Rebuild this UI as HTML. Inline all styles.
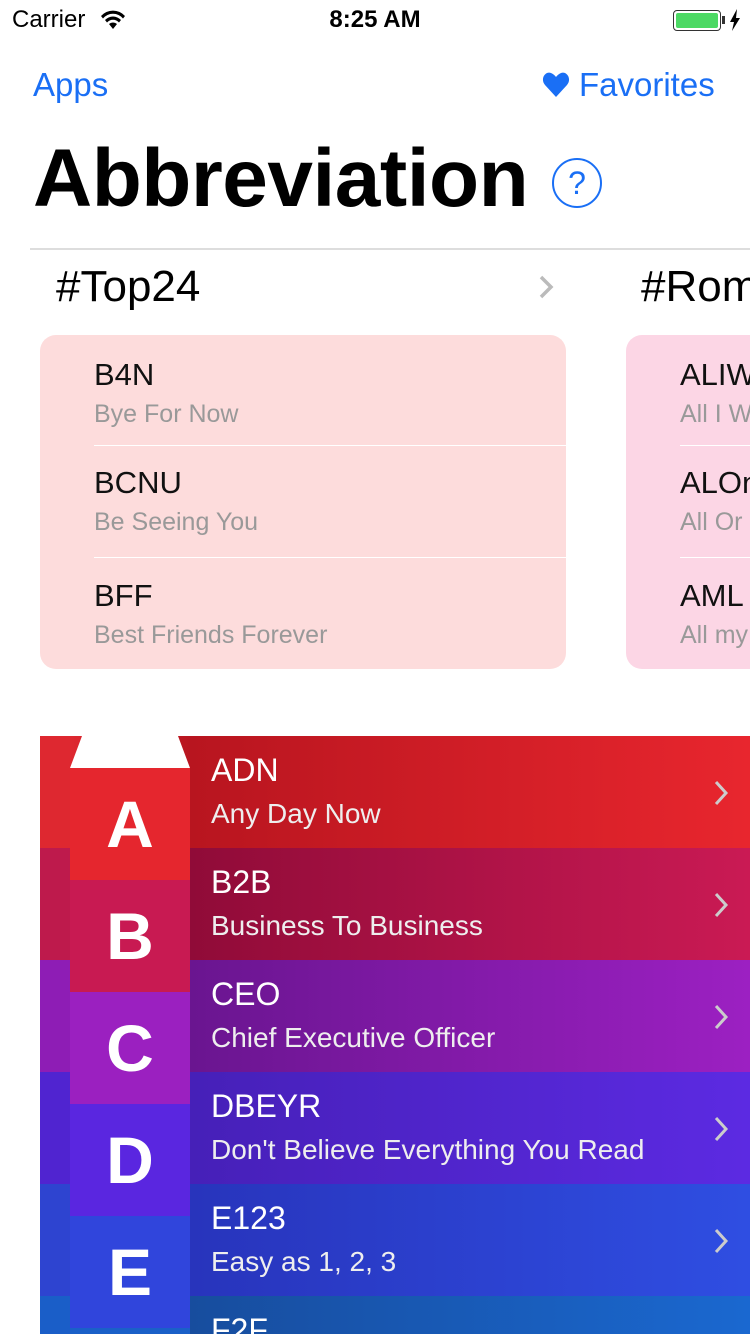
<!DOCTYPE html>
<html style="overflow:hidden;width:750px;height:1334px"><head><meta charset="utf-8"><style>
*{margin:0;padding:0;box-sizing:border-box}
body{width:750px;height:1334px;overflow:hidden;background:#fff;font-family:"Liberation Sans",sans-serif;position:relative}
.a{position:absolute;white-space:nowrap}
.blue{color:#1a6ff5}
.card{position:absolute;top:335px;height:334px;border-radius:16px;overflow:hidden}
.t{font-size:31px;color:#111}
.s{font-size:25px;color:#999}
.sep{position:absolute;height:1px;background:#fff}
.row{position:absolute;left:40px;width:710px;height:112px}
.row .ab{position:absolute;left:171px;top:16px;font-size:32px;color:#fff}
.row .ds{position:absolute;left:171px;top:62px;font-size:28px;color:#eee}
.row svg{position:absolute;left:672px;top:44px}
.idx{position:absolute;left:70px;width:120px;height:112px;color:#fff;font-weight:bold;font-size:66px;text-align:center;line-height:112px}
</style></head><body>
<div class="a" style="left:12px;top:6px;font-size:24px">Carrier</div>
<svg class="a" style="left:100px;top:10px" width="26" height="20" viewBox="0 0 26 20"><path d="M13 19l4-5a6 6 0 0 0-8 0z M5 10a11 11 0 0 1 16 0l-2 2.5a8 8 0 0 0-12 0z M1 6a16 16 0 0 1 24 0l-2 2.5a13 13 0 0 0-20 0z" fill="#000"/></svg>
<div class="a" style="left:0;width:750px;text-align:center;top:6px;font-size:24px;font-weight:bold">8:25 AM</div>
<div class="a" style="left:673px;top:10px;width:48px;height:21px;border:1.5px solid #333;border-radius:4px;padding:2px"><div style="width:100%;height:100%;background:#4cd964;border-radius:2px"></div></div>
<div class="a" style="left:722px;top:16px;width:3px;height:8px;background:#333"></div>
<svg class="a" style="left:729px;top:9px" width="12" height="22" viewBox="0 0 12 22"><path d="M8 0L1 13h4l-2 9 8-13H7z" fill="#000"/></svg>
<div class="a blue" style="left:33px;top:66px;font-size:33px">Apps</div>
<svg class="a" style="left:542px;top:72px" width="28" height="26" viewBox="0 0 28 26"><path d="M14 25L3 13C-2 7 3-1 9 1c2 .7 4 2.5 5 4 1-1.5 3-3.3 5-4 6-2 11 6 6 12z" fill="#1a6ff5"/></svg>
<div class="a blue" style="left:579px;top:66px;font-size:33px">Favorites</div>
<div class="a" style="left:33px;top:132px;font-size:82px;font-weight:bold;color:#000;letter-spacing:-0.5px">Abbreviation</div>
<div class="a blue" style="left:552px;top:158px;width:50px;height:50px;border:2px solid #1a6ff5;border-radius:50%;text-align:center;font-size:32px;line-height:46px">?</div>
<div class="a" style="left:30px;top:248px;width:720px;height:2px;background:#ddd"></div>
<div class="a" style="left:56px;top:262px;font-size:44px;color:#000">#Top24</div>
<svg class="a" style="left:538px;top:275px" width="18" height="24" viewBox="0 0 18 24"><path d="M3 2l10 10-10 10" stroke="#bbb" stroke-width="3.5" fill="none"/></svg>
<div class="a" style="left:641px;top:262px;font-size:44px;color:#000">#Rom</div>
<div class="card" style="left:40px;width:526px;background:#fddcdc">
<div class="a t" style="left:54px;top:22px">B4N</div><div class="a s" style="left:54px;top:65px">Bye For Now</div>
<div class="sep" style="left:54px;right:0;top:110px"></div>
<div class="a t" style="left:54px;top:130px">BCNU</div><div class="a s" style="left:54px;top:173px">Be Seeing You</div>
<div class="sep" style="left:54px;right:0;top:222px"></div>
<div class="a t" style="left:54px;top:243px">BFF</div><div class="a s" style="left:54px;top:286px">Best Friends Forever</div>
</div>
<div class="card" style="left:626px;width:200px;background:#fcd6e5">
<div class="a t" style="left:54px;top:22px">ALIW</div><div class="a s" style="left:54px;top:65px">All I W</div>
<div class="sep" style="left:54px;right:0;top:110px"></div>
<div class="a t" style="left:54px;top:130px">ALOn</div><div class="a s" style="left:54px;top:173px">All Or</div>
<div class="sep" style="left:54px;right:0;top:222px"></div>
<div class="a t" style="left:54px;top:243px">AML</div><div class="a s" style="left:54px;top:286px">All my</div>
</div>

<div class="row" style="top:736px;background:linear-gradient(90deg,#de2830 0,#de2830 30px,#b8151f 150px,#e8262e 710px)"><div class="ab">ADN</div><div class="ds">Any Day Now</div><svg width="18" height="26"><path d="M4 2l10 11-10 11" stroke="#ccc" stroke-width="3" fill="none"/></svg></div>
<div class="row" style="top:848px;background:linear-gradient(90deg,#be1a4c 0,#be1a4c 30px,#900b38 150px,#ca1a54 710px)"><div class="ab">B2B</div><div class="ds">Business To Business</div><svg width="18" height="26"><path d="M4 2l10 11-10 11" stroke="#ccc" stroke-width="3" fill="none"/></svg></div>
<div class="row" style="top:960px;background:linear-gradient(90deg,#8e1db5 0,#8e1db5 30px,#6a1590 150px,#9c20c2 710px)"><div class="ab">CEO</div><div class="ds">Chief Executive Officer</div><svg width="18" height="26"><path d="M4 2l10 11-10 11" stroke="#ccc" stroke-width="3" fill="none"/></svg></div>
<div class="row" style="top:1072px;background:linear-gradient(90deg,#5024d0 0,#5024d0 30px,#4620b8 150px,#5c2ae2 710px)"><div class="ab">DBEYR</div><div class="ds">Don't Believe Everything You Read</div><svg width="18" height="26"><path d="M4 2l10 11-10 11" stroke="#ccc" stroke-width="3" fill="none"/></svg></div>
<div class="row" style="top:1184px;background:linear-gradient(90deg,#2e44d0 0,#2e44d0 30px,#2834bc 150px,#2f4ee2 710px)"><div class="ab">E123</div><div class="ds">Easy as 1, 2, 3</div><svg width="18" height="26"><path d="M4 2l10 11-10 11" stroke="#ccc" stroke-width="3" fill="none"/></svg></div>
<div class="row" style="top:1296px;height:38px;overflow:hidden;background:linear-gradient(90deg,#1a5ec8 0,#1a5ec8 30px,#174d9e 150px,#1a68d0 710px)"><div class="ab">F2F</div></div>

<svg class="a" style="left:70px;top:736px" width="120" height="32"><path d="M12 0H108L120 32H0z" fill="#fff"/></svg>
<div class="idx" style="top:768px;background:#e5262e">A</div>
<div class="idx" style="top:880px;background:#c81a52">B</div>
<div class="idx" style="top:992px;background:#9b20c0">C</div>
<div class="idx" style="top:1104px;background:#5a26e0">D</div>
<div class="idx" style="top:1216px;background:#3045dc">E</div>
<div class="idx" style="top:1328px;height:6px;background:#1a60c8"></div>
</body></html>
